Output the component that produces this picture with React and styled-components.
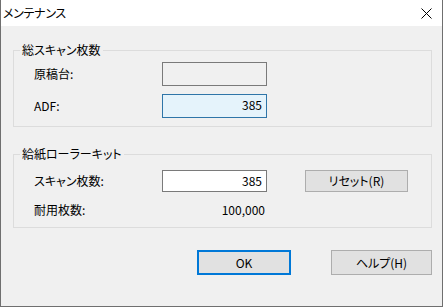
import React from 'react';
import styled, { createGlobalStyle } from 'styled-components';

const GlobalStyle = createGlobalStyle`
  html, body {
    margin: 0;
    padding: 0;
    background: #ffffff;
  }
  body {
    font-family: "Noto Sans CJK JP", "Noto Sans", sans-serif;
    font-size: 12px;
    color: #000000;
    font-feature-settings: "palt";
  }
`;

const Window = styled.div`
  width: 443px;
  height: 307px;
  box-sizing: border-box;
  border: 1px solid #6f6f6f;
  border-top: none;
  display: flex;
  flex-direction: column;
  background: #f0f0f0;
`;

const TitleBar = styled.div`
  height: 26px;
  flex: none;
  background: #ffffff;
  display: flex;
  align-items: center;
  justify-content: space-between;
  padding: 0 10px 0 2px;
  line-height: 1;
`;

const Title = styled.span`
  font-size: 12px;
  letter-spacing: -0.3px;
`;

const Body = styled.div`
  flex: 1;
  padding: 24px 10px 0 12px;
  display: flex;
  flex-direction: column;
`;

const Group = styled.div`
  position: relative;
  border: 1px solid #dcdcdc;
  padding: ${p => p.$pad};
  margin-top: ${p => p.$mt || 0}px;
  display: flex;
  flex-direction: column;
  gap: ${p => p.$gap}px;
`;

const Legend = styled.span`
  position: absolute;
  top: -9px;
  left: 6px;
  padding: 0 2px;
  background: #f0f0f0;
  line-height: 16px;
`;

const Row = styled.div`
  display: flex;
  align-items: center;
  height: ${p => p.$h}px;
`;

const Label = styled.span`
  width: 128px;
  flex: none;
  line-height: 1;
`;

const Field = styled.div`
  width: 105px;
  height: ${p => p.$h}px;
  box-sizing: border-box;
  border: 1px solid ${p => (p.$focus ? '#2f75a8' : '#7a7a7a')};
  background: ${p => (p.$focus ? '#e5f3fb' : p.$disabled ? '#f0f0f0' : '#ffffff')};
  display: flex;
  align-items: flex-start;
  justify-content: flex-end;
  padding: 3px 4px 0 0;
  line-height: 14px;
  flex: none;
`;

const Value = styled.span`
  width: 105px;
  text-align: right;
  padding-right: 2px;
  box-sizing: border-box;
  line-height: 1;
`;

const Button = styled.div`
  width: ${p => p.$w}px;
  height: ${p => p.$h}px;
  box-sizing: border-box;
  border: ${p => (p.$default ? '2px solid #0078d7' : '1px solid #adadad')};
  background: #e1e1e1;
  display: flex;
  align-items: center;
  justify-content: center;
  margin-left: ${p => p.$ml || 0}px;
  flex: none;
  line-height: 1;
`;

const Footer = styled.div`
  display: flex;
  justify-content: flex-end;
  margin-top: 22px;
  gap: 40px;
`;

function CloseIcon() {
  return (
    <svg width="11" height="11" viewBox="0 0 11 11">
      <path d="M0.5 0.5 L10.5 10.5 M10.5 0.5 L0.5 10.5" stroke="#000" strokeWidth="1" />
    </svg>
  );
}

export default function App() {
  return (
    <>
      <GlobalStyle />
      <Window>
        <TitleBar>
          <Title>メンテナンス</Title>
          <CloseIcon />
        </TitleBar>
        <Body>
          <Group $pad="11px 0 8px 20px" $gap={8}>
            <Legend>総スキャン枚数</Legend>
            <Row $h={24}>
              <Label>原稿台:</Label>
              <Field $h={24} $disabled />
            </Row>
            <Row $h={24}>
              <Label>ADF:</Label>
              <Field $h={24} $focus>385</Field>
            </Row>
          </Group>
          <Group $pad="15px 0 6px 20px" $gap={7} $mt={27}>
            <Legend>給紙ローラーキット</Legend>
            <Row $h={22}>
              <Label>スキャン枚数:</Label>
              <Field $h={22}>385</Field>
              <Button $w={103} $h={22} $ml={38}>リセット(R)</Button>
            </Row>
            <Row $h={22}>
              <Label>耐用枚数:</Label>
              <Value>100,000</Value>
            </Row>
          </Group>
          <Footer>
            <Button $w={94} $h={25} $default>OK</Button>
            <Button $w={101} $h={25}>ヘルプ(H)</Button>
          </Footer>
        </Body>
      </Window>
    </>
  );
}
